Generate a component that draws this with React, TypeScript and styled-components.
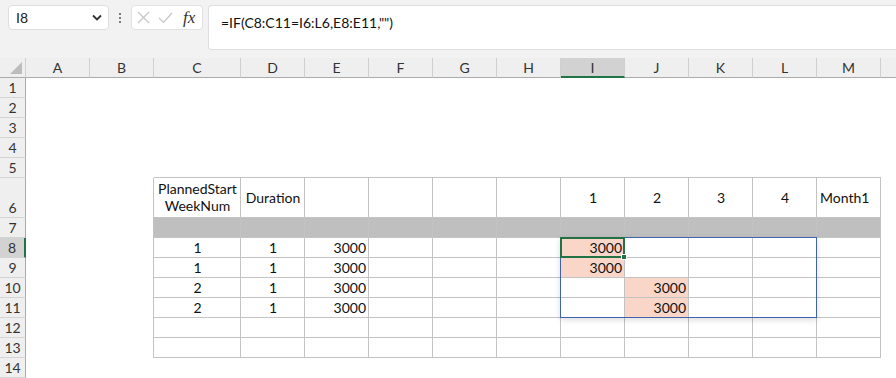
import React from "react";
import styled, { createGlobalStyle } from "styled-components";

const GlobalStyle = createGlobalStyle`
  html, body {
    margin: 0;
    padding: 0;
    background: #ffffff;
    overflow: hidden;
  }
  body {
    font-family: Lato, "Liberation Sans", sans-serif;
    color: #000000;
  }
`;

type Align = "left" | "center" | "right";

interface CellData {
  text: string;
  align: Align;
  middle?: boolean;
  fill?: string;
}

const ROW_HEAD_W = 26;
const COL_HEAD_H = 20;
const COLS = ["A", "B", "C", "D", "E", "F", "G", "H", "I", "J", "K", "L", "M", "N"];
const COL_W = [64, 64, 87, 64, 64, 64, 64, 64, 64, 64, 64, 64, 64, 64];
const ROW_H = [20, 20, 20, 20, 20, 40, 20, 20, 20, 20, 20, 20, 20, 20];

const PEACH = "#f9d6c8";
const BAND = "#bfbfbf";
const LINE = "#c3c3c3";

const cells: Record<string, CellData> = {
  C6: { text: "PlannedStart\nWeekNum", align: "center", middle: true },
  D6: { text: "Duration", align: "center", middle: true },
  I6: { text: "1", align: "center", middle: true },
  J6: { text: "2", align: "center", middle: true },
  K6: { text: "3", align: "center", middle: true },
  L6: { text: "4", align: "center", middle: true },
  M6: { text: "Month1", align: "left", middle: true },
  C8: { text: "1", align: "center" },
  C9: { text: "1", align: "center" },
  C10: { text: "2", align: "center" },
  C11: { text: "2", align: "center" },
  D8: { text: "1", align: "center" },
  D9: { text: "1", align: "center" },
  D10: { text: "1", align: "center" },
  D11: { text: "1", align: "center" },
  E8: { text: "3000", align: "right" },
  E9: { text: "3000", align: "right" },
  E10: { text: "3000", align: "right" },
  E11: { text: "3000", align: "right" },
  I8: { text: "3000", align: "right", fill: PEACH },
  I9: { text: "3000", align: "right", fill: PEACH },
  J10: { text: "3000", align: "right", fill: PEACH },
  J11: { text: "3000", align: "right", fill: PEACH },
};

const colLeft = (c: number) => ROW_HEAD_W + COL_W.slice(0, c).reduce((a, b) => a + b, 0);
const rowTop = (r: number) => COL_HEAD_H + ROW_H.slice(0, r - 1).reduce((a, b) => a + b, 0);

/* ---------- formula bar ---------- */

const TopBar = styled.div`
  height: 58px;
  background: #f2f2f2;
  display: flex;
  align-items: flex-start;
  padding: 5px 0 0 8px;
  box-sizing: border-box;
`;

const NameBox = styled.div`
  width: 101px;
  height: 25px;
  box-sizing: border-box;
  background: #ffffff;
  border: 1px solid #dedede;
  border-radius: 4px;
  display: flex;
  align-items: center;
  justify-content: space-between;
  padding: 0 6px 0 7px;
  font-size: 14px;
  color: #222;
`;

const Dots = styled.div`
  width: 22px;
  height: 25px;
  display: flex;
  flex-direction: column;
  align-items: center;
  justify-content: center;
  gap: 2px;

  span {
    width: 2px;
    height: 2px;
    background: #555;
    border-radius: 1px;
  }
`;

const FuncBox = styled.div`
  width: 72px;
  height: 25px;
  box-sizing: border-box;
  background: #ffffff;
  border: 1px solid #e2e2e2;
  border-radius: 4px;
  display: flex;
  align-items: center;
  padding: 0 4px 0 5px;
  gap: 8px;
`;

const Fx = styled.span`
  font-family: "Liberation Serif", "Times New Roman", serif;
  font-style: italic;
  font-size: 17px;
  color: #333;
  margin-left: 2px;
`;

const FormulaInput = styled.div`
  flex: 1;
  margin-left: 5px;
  height: 45px;
  box-sizing: border-box;
  background: #ffffff;
  border: 1px solid #dedede;
  border-right: none;
  border-radius: 4px 0 0 4px;
  padding: 8px 0 0 12px;
  font-size: 14px;
  color: #111;
`;

/* ---------- sheet ---------- */

const Sheet = styled.div`
  position: relative;
  width: 100%;
  overflow: hidden;
`;

const Grid = styled.div`
  display: grid;
  grid-template-columns: ${ROW_HEAD_W}px ${COL_W.map((w) => `${w}px`).join(" ")};
  grid-template-rows: ${COL_HEAD_H}px ${ROW_H.map((h) => `${h}px`).join(" ")};
`;

const Corner = styled.div`
  background: #efefef;
  border-right: 1px solid #d0d0d0;
  border-bottom: 1px solid #ababab;
  box-sizing: border-box;
  position: relative;

  &::after {
    content: "";
    position: absolute;
    right: 3px;
    bottom: 3px;
    border-left: 12px solid transparent;
    border-bottom: 12px solid #bdbdbd;
  }
`;

const ColHead = styled.div<{ $active: boolean }>`
  box-sizing: border-box;
  background: ${(p) => (p.$active ? "#d2d2d2" : "#efefef")};
  border-right: 1px solid #d0d0d0;
  border-bottom: ${(p) => (p.$active ? "2px solid #217346" : "1px solid #ababab")};
  display: flex;
  align-items: center;
  justify-content: center;
  font-size: 14px;
  color: #333;
`;

const RowHead = styled.div<{ $active: boolean }>`
  box-sizing: border-box;
  background: ${(p) => (p.$active ? "#d2d2d2" : "#efefef")};
  border-bottom: 1px solid #d4d4d4;
  border-right: ${(p) => (p.$active ? "2px solid #217346" : "1px solid #ababab")};
  display: flex;
  align-items: flex-end;
  justify-content: center;
  padding-bottom: 1px;
  font-size: 14px;
  line-height: 17px;
  color: #333;
`;

const Cell = styled.div<{
  $right: boolean;
  $bottom: boolean;
  $fill: string;
  $align: Align;
  $middle: boolean;
}>`
  box-sizing: border-box;
  display: flex;
  align-items: ${(p) => (p.$middle ? "center" : "flex-end")};
  justify-content: ${(p) =>
    p.$align === "left" ? "flex-start" : p.$align === "right" ? "flex-end" : "center"};
  text-align: ${(p) => p.$align};
  padding: 0 2px 1px 3px;
  background: ${(p) => p.$fill};
  border-right: ${(p) => (p.$right ? `1px solid ${LINE}` : "none")};
  border-bottom: ${(p) => (p.$bottom ? `1px solid ${LINE}` : "none")};
  font-size: 14px;
  line-height: 17px;
  color: #111;
  white-space: pre-line;
  overflow: hidden;
`;

const SpillRange = styled.div`
  position: absolute;
  box-sizing: border-box;
  border: 1px solid #3f63ad;
  box-shadow: 0 2px 6px rgba(0, 0, 0, 0.14);
  pointer-events: none;
`;

const ActiveCell = styled.div`
  position: absolute;
  box-sizing: border-box;
  border: 2px solid #217346;
  pointer-events: none;
`;

const FillHandle = styled.div`
  position: absolute;
  width: 6px;
  height: 6px;
  box-sizing: border-box;
  background: #217346;
  border: 1px solid #ffffff;
`;

const inTable = (c: number, r: number) => c >= 2 && c <= 12 && r >= 6 && r <= 13;

const SheetCell: React.FC<{ c: number; r: number }> = ({ c, r }) => {
  const data = cells[`${COLS[c]}${r}`];
  const table = inTable(c, r);
  const right = table || (c === 1 && r >= 6 && r <= 13);
  const bottom = table || (r === 5 && c >= 2 && c <= 12);
  const fill = data?.fill ?? (r === 7 && table ? BAND : "#ffffff");
  return (
    <Cell
      $right={right}
      $bottom={bottom}
      $fill={fill}
      $align={data?.align ?? "left"}
      $middle={!!data?.middle}
    >
      {data?.text}
    </Cell>
  );
};

const Cross = () => (
  <svg width="13" height="13" viewBox="0 0 13 13">
    <path d="M1 1 L12 12 M12 1 L1 12" stroke="#c4c4c4" strokeWidth="1.2" fill="none" />
  </svg>
);

const Check = () => (
  <svg width="15" height="12" viewBox="0 0 15 12">
    <path d="M1 6 L5.5 10.5 L14 1" stroke="#c4c4c4" strokeWidth="1.2" fill="none" />
  </svg>
);

const Chevron = () => (
  <svg width="10" height="7" viewBox="0 0 10 7">
    <path d="M1 1.5 L5 5.5 L9 1.5" stroke="#333" strokeWidth="1.8" fill="none" />
  </svg>
);

const App: React.FC = () => {
  const rows = ROW_H.map((_, i) => i + 1);
  const iLeft = colLeft(8);
  const r8Top = rowTop(8);
  const spillWidth = colLeft(12) - iLeft + 1;
  const spillHeight = rowTop(12) - r8Top + 1;

  return (
    <>
      <GlobalStyle />
      <TopBar>
        <NameBox>
          <span>I8</span>
          <Chevron />
        </NameBox>
        <Dots>
          <span />
          <span />
          <span />
        </Dots>
        <FuncBox>
          <Cross />
          <Check />
          <Fx>fx</Fx>
        </FuncBox>
        <FormulaInput>=IF(C8:C11=I6:L6,E8:E11,"")</FormulaInput>
      </TopBar>
      <Sheet>
        <Grid>
          <Corner />
          {COLS.map((col, c) => (
            <ColHead key={col} $active={c === 8}>
              {c < 13 ? col : ""}
            </ColHead>
          ))}
          {rows.map((r) => (
            <React.Fragment key={r}>
              <RowHead $active={r === 8}>{r}</RowHead>
              {COLS.map((col, c) => (
                <SheetCell key={col} c={c} r={r} />
              ))}
            </React.Fragment>
          ))}
        </Grid>
        <SpillRange
          style={{ left: iLeft - 1, top: r8Top - 1, width: spillWidth, height: spillHeight }}
        />
        <ActiveCell
          style={{ left: iLeft - 1, top: r8Top - 1, width: COL_W[8] + 1, height: ROW_H[7] + 1 }}
        />
        <FillHandle style={{ left: iLeft + COL_W[8] - 4, top: r8Top + ROW_H[7] - 4 }} />
      </Sheet>
    </>
  );
};

export default App;
